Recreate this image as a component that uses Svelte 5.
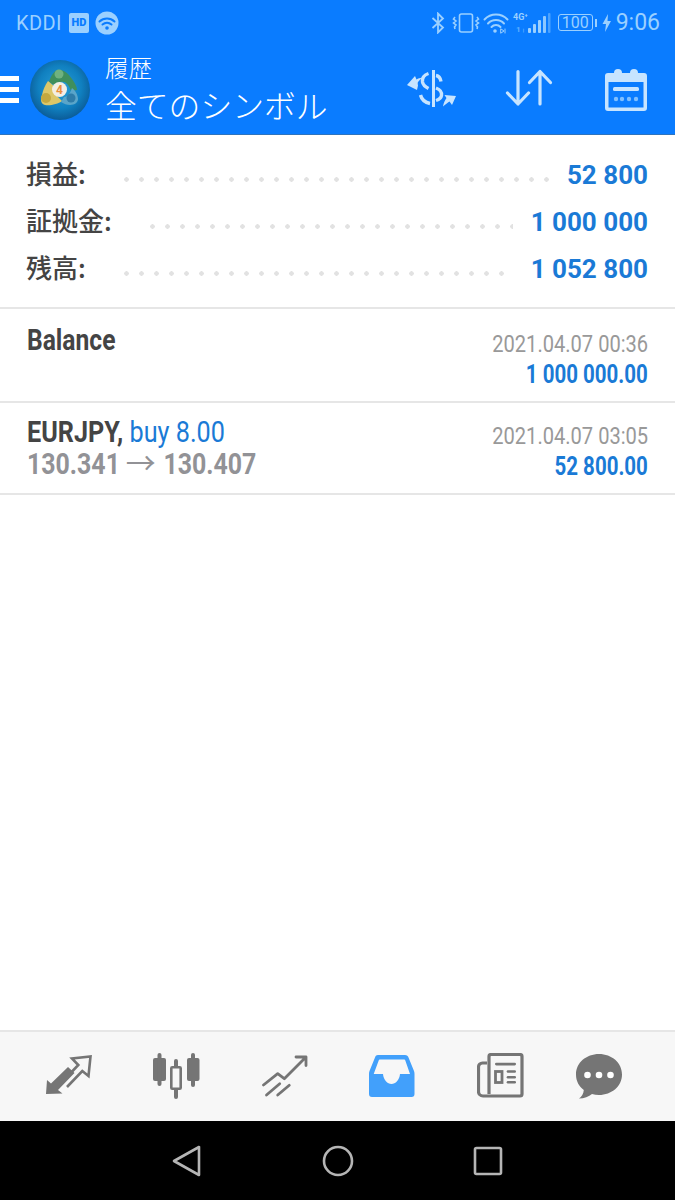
<script>
	const summary = [
		{ label: '損益:', value: '52 800' },
		{ label: '証拠金:', value: '1 000 000' },
		{ label: '残高:', value: '1 052 800' }
	];
</script>

<div class="screen">
	<header class="top">
		<div class="status">
			<div class="status-left">
				<span class="carrier">KDDI</span>
				<span class="hd">HD</span>
				<svg class="wifi-badge" viewBox="0 0 24 24" width="24" height="24">
					<circle cx="12" cy="12" r="11.5" fill="#9bd0ff" />
					<path d="M4.500 10.500a11 11 0 0 1 15 0M7.500 13.500a7 7 0 0 1 9 0" fill="none" stroke="#0a7cff" stroke-width="2" stroke-linecap="round" />
					<circle cx="12" cy="17" r="1.800" fill="#0a7cff" />
				</svg>
			</div>
			<div class="status-right">
				<svg class="bt" viewBox="0 0 14 22" width="14" height="22" fill="none" stroke="#9bd0ff" stroke-width="1.800">
					<path d="M1.500 6 L12 15.500 L7 20.500 V1.500 L12 6.500 L1.500 16" />
				</svg>
				<svg viewBox="0 0 28 22" width="28" height="22" fill="none" stroke="#9bd0ff" stroke-width="1.600">
					<rect x="7.500" y="2" width="13" height="18" rx="2" />
					<path d="M3 5l-1.500 2 2.500 2-2.500 2 2.500 2-1.500 2 .5 2M25 5l1.500 2-2.500 2 2.500 2-2.500 2 1.500 2-.5 2" />
				</svg>
				<svg class="wifi" viewBox="0 0 26 22" width="26" height="22" fill="none" stroke="#9bd0ff" stroke-width="2" stroke-linecap="round">
					<path d="M1.500 7.500a16 16 0 0 1 23 0M5 11.500a11 11 0 0 1 16 0M8.500 15a6 6 0 0 1 9 0" />
					<circle cx="12" cy="19" r="1.800" fill="#9bd0ff" stroke="none" />
					<path d="M18 17l3 2-3 2zM22 17v4" stroke-width="1" />
				</svg>
				<svg class="signal" viewBox="0 0 38 22" width="38" height="22">
					<text x="0" y="8" class="four-g">4G⁺</text>
					<text x="3" y="20" class="one-one">1ᛧ</text>
					<rect x="15" y="16" width="3" height="5" rx="1" fill="#9bd0ff" />
					<rect x="20" y="12" width="3" height="9" rx="1" fill="#9bd0ff" />
					<rect x="25" y="8" width="3" height="13" rx="1" fill="#9bd0ff" />
					<rect x="30" y="4" width="3" height="17" rx="1" fill="#9bd0ff" opacity=".9" />
					<rect x="35" y="1" width="2.500" height="20" rx="1" fill="#9bd0ff" opacity=".45" />
				</svg>
				<span class="battery">100</span>
				<span class="battery-tip"></span>
				<svg viewBox="0 0 9 18" width="9" height="18"><path d="M6 0 L0.500 10 H4 L3 18 L9 7 H5.500Z" fill="#9bd0ff" /></svg>
				<span class="clock">9:06</span>
			</div>
		</div>
		<div class="appbar">
			<div class="burger"><i></i><i></i><i></i></div>
			<svg class="logo" viewBox="0 0 60 60" width="60" height="60">
				<defs>
					<radialGradient id="logobg" cx="50%" cy="45%" r="55%">
						<stop offset="0" stop-color="#2a9fd8" />
						<stop offset="0.65" stop-color="#1080c0" />
						<stop offset="1" stop-color="#0b5c98" />
					</radialGradient>
				</defs>
				<circle cx="30" cy="30" r="30" fill="url(#logobg)" />
				<path d="M29 10c5 0 9 3 13 9 3 4 5 8 5 11l-6 1c-1-3-3-8-7-9-3-1-7 0-10 3l-5-3c2-6 5-12 10-12z" fill="#3f8f5c" />
				<circle cx="29" cy="14" r="4.500" fill="#6fb27f" />
				<path d="M18 21l6 5c-1 4 1 8 4 11l4 4c-4 3-12 5-17 4-4-1-5-5-3-10 1-5 3-10 6-14z" fill="#dcc768" />
				<circle cx="16" cy="38" r="5" fill="#c4a83f" />
				<path d="M42 28c3 2 6 7 6 11 0 3-3 6-8 6-3 0-6-1-9-3l3-5c3 0 6-3 8-9z" fill="#5aa5c9" />
				<circle cx="41" cy="38" r="4.500" fill="#2f7ca8" />
				<circle cx="29.500" cy="29.500" r="7.500" fill="#f3eee4" />
				<text x="29.500" y="34" class="logo-four">4</text>
			</svg>
			<div class="titles">
				<div class="sub">履歴</div>
				<div class="title">全てのシンボル</div>
			</div>
			<div class="actions">
				<svg viewBox="0 0 50 44" width="50" height="44" fill="#c7e4ff">
					<rect x="25" y="2" width="3" height="37" />
					<g fill="none" stroke="#c7e4ff" stroke-width="3.400">
						<path d="M21.500 5.500C17 7 15 10.500 15.500 14c.5 3 3 5 6 6.500" />
						<path d="M29 7.500c3 .5 4.500 3 5 6" />
						<path d="M29 20c4 1.500 6 4 5.500 7.500-.3 2-2.500 4-5.500 5" />
						<path d="M13.500 27c1 4 4.500 7.500 9.500 8.500" />
					</g>
					<path d="M0 17 L8 8 L9.500 11.500 C11 10.500 13 10 15 9.500 L11 14 C10.500 15 10.800 16 11 17.500 L10 22 Z" />
					<path d="M49 28 L37.500 27 L39.500 30 C38 32 36.500 35 36 38.500 C38.500 36 40.500 35 42.500 33.500 L45 37 Z" />
				</svg>
				<svg viewBox="0 0 48 44" width="48" height="44" fill="none" stroke="#c7e4ff" stroke-width="3.200" stroke-linecap="round" stroke-linejoin="round">
					<path d="M13 3.500 V36 M2.500 25 L13 36 L23.500 25" />
					<path d="M35 36 V3.500 M24.500 14.500 L35 3.500 L45.500 14.500" />
				</svg>
				<svg class="calendar" viewBox="0 0 44 44" width="44" height="44">
					<path fill-rule="evenodd" fill="#c7e4ff" d="M4 5h36a3 3 0 0 1 3 3v32a3 3 0 0 1-3 3H4a3 3 0 0 1-3-3V8a3 3 0 0 1 3-3zM4.500 14v25.500h35V14z" />
					<circle cx="14" cy="5" r="4" fill="#c7e4ff" />
					<circle cx="30" cy="5" r="4" fill="#c7e4ff" />
					<rect x="9" y="19" width="26" height="4" rx="1.500" fill="#c7e4ff" />
					<circle cx="12" cy="31" r="2.200" fill="#7fbfff" />
					<circle cx="18" cy="31" r="2.200" fill="#7fbfff" />
					<circle cx="25" cy="31" r="2.200" fill="#7fbfff" />
					<circle cx="32" cy="31" r="2.200" fill="#7fbfff" />
				</svg>
			</div>
		</div>
	</header>

	<section class="summary">
		{#each summary as row}
			<div class="sum-row">
				<span class="sum-label">{row.label}</span>
				<span class="leader"></span>
				<span class="sum-value">{row.value}</span>
			</div>
		{/each}
	</section>

	<div class="deal first">
		<div class="deal-left">
			<div class="line"><b class="narrow-b">Balance</b></div>
		</div>
		<div class="deal-right">
			<div class="date"><span class="narrow-r">2021.04.07 00:36</span></div>
			<div class="amount"><span class="narrow-r">1 000 000.00</span></div>
		</div>
	</div>

	<div class="deal second">
		<div class="deal-left">
			<div class="line"><span class="narrow"><b>EURJPY,</b> <span class="buy">buy 8.00</span></span></div>
			<div class="prices"><span class="narrow">130.341 <span class="arrow">→</span> 130.407</span></div>
		</div>
		<div class="deal-right">
			<div class="date"><span class="narrow-r">2021.04.07 03:05</span></div>
			<div class="amount"><span class="narrow-r">52 800.00</span></div>
		</div>
	</div>

	<div class="spacer"></div>

	<nav class="tabs">
		<svg viewBox="0 0 46 41" width="46" height="41">
			<path d="M0 39 L1 25 L5 28.500 L22 12 L28.500 18 L12 35 L16.500 38.500 Z" fill="#757575" />
			<path d="M24.700 18 L32.300 10 L26 3.500 L44.500 1.500 L42.500 21 L36.300 16 L21 32" fill="none" stroke="#757575" stroke-width="2.600" />
		</svg>
		<svg class="candles" viewBox="0 0 48 46" width="48" height="46" fill="#757575">
			<rect x="1" y="5" width="13" height="23" rx="2" />
			<rect x="5.500" y="0" width="4" height="33" rx="2" />
			<rect x="35" y="5" width="12.500" height="23" rx="2" />
			<rect x="39" y="0" width="4" height="34" rx="2" />
			<rect x="22" y="6" width="4" height="40" rx="2" />
			<rect x="19.300" y="14.300" width="9.400" height="21.400" rx="1" fill="#f7f7f7" stroke="#757575" stroke-width="2.600" />
		</svg>
		<svg viewBox="0 0 46 44" width="46" height="44" fill="none" stroke="#757575" stroke-width="2.800" stroke-linecap="round" stroke-linejoin="round">
			<path d="M1.500 31 L15.700 19.700 L22.300 24.700 L44 3 M34 3 H44 V11.500" />
			<path d="M4.500 41 L17.700 29.700 M15.700 41 L27.300 31.300" />
		</svg>
		<svg class="inbox" viewBox="0 0 46 42" width="46" height="42">
			<path fill="#42a0fb" d="M9 0h27c2 0 3 1 3.500 2.500L45 16c.4 1 .5 2 .5 3v20c0 2-1 3-3 3H3c-2 0-3-1-3-3V19c0-1 .1-2 .5-3L6 2.500C6.500 1 7 0 9 0z" />
			<path fill="#f7f7f7" d="M11 4.500h24c.7 0 1 .3 1.300 1L41 19H31c-.5 6-4.500 10-8.500 10S14.500 25 14 19H4.700L9.700 5.500c.3-.7.6-1 1.300-1z" />
		</svg>
		<svg viewBox="0 0 48 46" width="48" height="46">
			<path fill="none" stroke="#757575" stroke-width="3.200" stroke-linejoin="round" d="M12 41V3.500a2 2 0 0 1 2-2H43a2 2 0 0 1 2 2V41a2 2 0 0 1-2 2H6a4.500 4.500 0 0 1-4.500-4.500V14a4 4 0 0 1 4-4H10" />
			<rect x="18" y="9.700" width="21" height="2.700" rx="1.300" fill="#757575" />
			<rect x="18.500" y="18.500" width="6.500" height="11" fill="none" stroke="#757575" stroke-width="2.800" />
			<rect x="29.700" y="17.300" width="9.300" height="2.500" rx="1.200" fill="#757575" />
			<rect x="29.700" y="23" width="9.300" height="2.500" rx="1.200" fill="#757575" />
			<rect x="29.700" y="28" width="9.300" height="2.500" rx="1.200" fill="#757575" />
		</svg>
		<svg class="chat" viewBox="0 0 46 46" width="46" height="46">
			<path fill="#757575" d="M23 1c12.700 0 23 8.800 23 20.500S35.700 42 23 42c-2.500 0-4.800-.3-7-1-3 2.700-8 4.500-13 4.500 2.700-1.800 4.500-4.500 4.800-8.500C3 33.500 0 28 0 21.500 0 9.800 10.300 1 23 1z" />
			<circle cx="11.500" cy="22" r="3.300" fill="#fff" />
			<circle cx="23" cy="22" r="3.300" fill="#fff" />
			<circle cx="34.500" cy="22" r="3.300" fill="#fff" />
		</svg>
	</nav>

	<footer class="sysnav">
		<svg viewBox="0 0 30 32" width="30" height="32" fill="none" stroke="#b5b5b5" stroke-width="2.600" stroke-linejoin="round">
			<path d="M27 2 V30 L2 16 Z" />
		</svg>
		<svg viewBox="0 0 32 32" width="32" height="32" fill="none" stroke="#b5b5b5" stroke-width="2.600">
			<circle cx="16" cy="16" r="14" />
		</svg>
		<svg viewBox="0 0 30 30" width="30" height="30" fill="none" stroke="#b5b5b5" stroke-width="2.600">
			<rect x="2" y="2" width="26" height="26" rx="1.500" />
		</svg>
	</footer>
</div>

<style>
	:global(body) {
		margin: 0;
		background: #fff;
	}

	.screen {
		width: 675px;
		height: 1200px;
		display: flex;
		flex-direction: column;
		overflow: hidden;
		font-family: Roboto, 'Noto Sans CJK JP', sans-serif;
	}

	.top {
		background: #0a7cff;
		height: 135px;
		box-sizing: border-box;
		border-bottom: 1px solid #2f74bd;
		flex: none;
	}

	.status {
		height: 45px;
		box-sizing: border-box;
		padding: 0 15px 0 16px;
		display: flex;
		justify-content: space-between;
		align-items: center;
		color: #9bd0ff;
	}

	.status-left,
	.status-right {
		display: flex;
		align-items: center;
	}

	.status-right {
		gap: 3px;
	}

	.bt {
		margin-right: 4px;
	}

	.wifi {
		margin-right: 1px;
	}

	.carrier {
		font-size: 20px;
		letter-spacing: 0.4px;
		margin-right: 7px;
	}

	.hd {
		background: #9bd0ff;
		color: #0a7cff;
		font-size: 11px;
		font-weight: 900;
		width: 20px;
		height: 20px;
		line-height: 20px;
		text-align: center;
		border-radius: 2px;
		margin-right: 6px;
	}

	.four-g {
		font: 700 9px Roboto, sans-serif;
		fill: #9bd0ff;
	}

	.one-one {
		font: 700 8px Roboto, sans-serif;
		fill: #5fb0ff;
	}

	.battery {
		border: 1.5px solid #9bd0ff;
		border-radius: 3px;
		font-size: 16px;
		line-height: 15px;
		width: 33px;
		text-align: center;
		margin-left: 4px;
	}

	.battery-tip {
		width: 2px;
		height: 8px;
		background: #9bd0ff;
		margin-left: -1px;
		margin-right: 2px;
	}

	.clock {
		font-size: 23px;
		margin-left: 2px;
	}

	.appbar {
		height: 89px;
		display: flex;
		align-items: center;
	}

	.burger {
		width: 19px;
		height: 27px;
		display: flex;
		flex-direction: column;
		justify-content: space-between;
		margin-right: 11px;
	}

	.burger i {
		height: 5px;
		background: #fff;
	}

	.logo {
		flex: none;
		margin-right: 15px;
	}

	.logo-four {
		font: 700 12px Roboto, sans-serif;
		fill: #e98f3c;
		text-anchor: middle;
	}

	.titles {
		color: #fff;
		display: flex;
		flex-direction: column;
		font-family: 'Noto Sans CJK JP', sans-serif;
		font-weight: 300;
	}

	.sub {
		font-size: 23.5px;
		line-height: 30px;
		margin-top: -4px;
	}

	.title {
		font-size: 31.8px;
		line-height: 40px;
		margin-top: 2px;
	}

	.actions {
		margin-left: auto;
		display: flex;
		align-items: center;
		gap: 48px;
		padding-right: 27px;
	}

	.calendar {
		margin-left: 3px;
	}

	.summary {
		flex: none;
		height: 174px;
		box-sizing: border-box;
		padding: 16px 27px 0;
		border-bottom: 2px solid #e6e6e6;
	}

	.sum-row {
		height: 47px;
		display: flex;
		align-items: center;
	}

	.sum-label {
		font-family: 'Noto Sans CJK JP', sans-serif;
		font-size: 26px;
		line-height: 30px;
		font-weight: 500;
		color: #444;
		margin: -4px 0 0 -1px;
	}

	.leader {
		flex: 1;
		height: 5px;
		margin: 10px 18px 0 38px;
		background: radial-gradient(circle at 2.5px 2.5px, #e2e2e2 2px, transparent 2.5px) 0 0 / 15px 5px repeat-x;
	}

	.sum-value {
		font-size: 26px;
		font-weight: 700;
		color: #1a7ad6;
	}

	.deal {
		flex: none;
		box-sizing: border-box;
		padding-left: 27px;
		padding-right: 27px;
		border-bottom: 2px solid #e6e6e6;
		display: flex;
		justify-content: space-between;
	}

	.deal.first {
		height: 94px;
		padding-top: 15px;
	}

	.deal.second {
		height: 92px;
		padding-top: 13px;
	}

	.line {
		height: 32px;
		font-size: 30px;
		line-height: 32px;
		color: #444;
	}

	.narrow-b,
	.narrow {
		display: inline-block;
		transform-origin: left center;
		white-space: nowrap;
	}

	.narrow-b {
		transform: scaleX(0.82);
		font-weight: 700;
	}

	.narrow {
		transform: scaleX(0.84);
		font-weight: 400;
	}

	.narrow b {
		font-weight: 700;
	}

	.buy {
		color: #1a7ad6;
	}

	.prices {
		height: 32px;
		font-size: 30px;
		line-height: 32px;
		color: #929296;
	}

	.prices .narrow {
		font-weight: 700;
		transform: scaleX(0.83);
	}

	.arrow {
		font-weight: 400;
		display: inline-block;
		transform: scaleX(1.2);
		margin: 0 5px 0 2.5px;
	}

	.deal-right {
		text-align: right;
		margin-top: 4px;
	}

	.narrow-r {
		display: inline-block;
		transform-origin: right center;
		white-space: nowrap;
		transform: scaleX(0.82);
	}

	.date {
		font-size: 24.5px;
		line-height: 32px;
		color: #999;
	}

	.amount {
		font-size: 25px;
		line-height: 32px;
		font-weight: 700;
		color: #1a7ad6;
		margin-top: -1px;
	}

	.spacer {
		flex: 1;
	}

	.tabs {
		flex: none;
		height: 91px;
		box-sizing: border-box;
		background: #f7f7f7;
		border-top: 2px solid #e6e6e6;
		padding: 0 0 2px 15px;
		display: grid;
		grid-template-columns: repeat(6, 108px);
		align-items: center;
		justify-items: center;
	}

	.candles,
	.inbox {
		margin-right: 2px;
	}

	.chat {
		margin-left: -20px;
	}

	.sysnav {
		flex: none;
		height: 79px;
		background: #000;
		display: flex;
		align-items: center;
		justify-content: space-between;
		padding: 0 172px;
	}
</style>
